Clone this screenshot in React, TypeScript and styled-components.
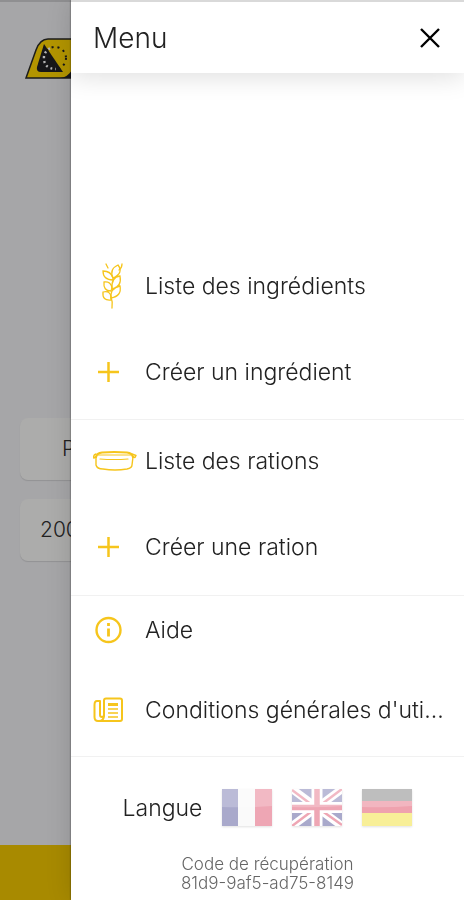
import React, { useState } from "react";
import styled, { createGlobalStyle } from "styled-components";

const GlobalStyle = createGlobalStyle`
  *, *::before, *::after { box-sizing: border-box; }
  body {
    margin: 0;
    background: #a6a6a8;
    color: #222;
    font-family: Inter, "Open Sans", sans-serif;
    font-weight: 300;
  }
  button, a { color: inherit; font: inherit; }
`;

const Screen = styled.div`
  display: flex;
  flex-direction: column;
  min-height: 100vh;
  overflow: hidden;
`;

const PageHeader = styled.header`
  padding: 36px 24px 0;
  border-top: 2px solid #8f8f91;
`;

const PageContent = styled.main`
  display: flex;
  flex: 1;
  flex-direction: column;
  justify-content: center;
  gap: 19px;
  padding: 50px 20px 0;
`;

const PageCard = styled.div<{ $indent: number }>`
  height: 62px;
  padding-left: ${({ $indent }) => $indent}px;
  border-radius: 8px;
  background: #acacab;
  box-shadow: 0 1px 1px rgba(0, 0, 0, 0.12);
  font-size: 21px;
  line-height: 62px;
`;

const PageFooter = styled.footer`
  height: 55px;
  background: #a88a00;
`;

const Drawer = styled.aside`
  position: fixed;
  inset: 0 0 0 71px;
  display: flex;
  flex-direction: column;
  overflow-y: auto;
  border-top: 2px solid #d9d9d9;
  background: #fff;
  box-shadow: 0 0 2px rgba(0, 0, 0, 0.55), 0 0 24px rgba(0, 0, 0, 0.14);
`;

const DrawerHeader = styled.header`
  display: flex;
  flex: none;
  align-items: center;
  justify-content: space-between;
  height: 71px;
  padding: 0 22px;
  box-shadow: 0 4px 26px rgba(0, 0, 0, 0.13);
`;

const Title = styled.h1`
  margin: 0;
  font-size: 28px;
  font-weight: 300;
  line-height: 32px;
`;

const CloseButton = styled.button`
  display: grid;
  padding: 0;
  border: 0;
  background: none;
  color: #000;
  cursor: pointer;
`;

const Nav = styled.nav`
  padding-top: 179px;
`;

const Group = styled.div<{ $gap: number; $top: number; $bottom: number }>`
  display: flex;
  flex-direction: column;
  gap: ${({ $gap }) => $gap}px;
  padding: ${({ $top, $bottom }) => `${$top}px 12px ${$bottom}px 22px`};
  border-bottom: 1px solid #f1f1f1;
`;

const MenuLink = styled.a`
  display: flex;
  align-items: center;
  height: 68px;
  font-size: 23px;
  line-height: 28px;
  text-decoration: none;
`;

const IconSlot = styled.span`
  display: grid;
  flex: none;
  width: 52px;
  color: #f6c51c;
`;

const Label = styled.span`
  overflow: hidden;
  text-overflow: ellipsis;
  white-space: nowrap;
`;

const Languages = styled.section`
  display: flex;
  align-items: center;
  justify-content: center;
  gap: 20px;
  margin-top: 32px;
  font-size: 23px;
  line-height: 30px;
`;

const FlagButton = styled.button`
  display: grid;
  padding: 0;
  border: 0;
  background: none;
  filter: drop-shadow(0 1px 1px rgba(0, 0, 0, 0.3));
  opacity: 0.4;
  cursor: pointer;
`;

const Recovery = styled.p`
  margin: 29px 0 0;
  color: #666;
  font-size: 17px;
  line-height: 19px;
  text-align: center;
`;

const Logo = () => (
  <svg width="96" height="42" viewBox="0 0 96 42" role="img" aria-label="Logo">
    <path d="M2 40 12 12Q16 1 24 1H94L80 40Z" fill="#b39500" stroke="#1d1d1b" strokeWidth="1.5" />
    <path d="M20 6 39 34H17Q12 34 13 29Z" fill="#171719" />
    <path d="M36 40Q44 39 48 32V40Z" fill="#171719" />
    <circle cx="31" cy="20" r="11" fill="none" stroke="#171719" strokeWidth="2" strokeDasharray="2 4" />
    <path d="M26 10.3A11 11 0 0 0 20 18Q19 31 32 31" fill="none" stroke="#b5b5b5" strokeWidth="2.4" strokeDasharray="2 3" />
  </svg>
);

const CloseIcon = () => (
  <svg width="24" height="24" viewBox="0 0 24 24" fill="none" stroke="currentColor" strokeWidth="2.4">
    <path d="m3 3 18 18M21 3 3 21" />
  </svg>
);

const WheatIcon = () => (
  <svg width="40" height="46" viewBox="0 0 40 46" fill="none" stroke="currentColor" strokeWidth="1.3" strokeLinecap="round">
    <path d="M19 45Q20 39 18 34M13 1Q14 3 15 5M29 1Q29 5 26 7" />
    <path d="M18 37Q9 38 10 29Q17 27 18 34ZM18 28Q10 28 11 19Q18 18 19 25ZM20 17Q10 17 10 8Q18 8 20 15Z" />
    <path d="M18 35Q17 25 27 23Q29 33 18 35ZM19 26Q18 14 27 13Q29 24 19 26ZM20 15Q16 6 25 2Q31 10 20 15Z" />
  </svg>
);

const PlusIcon = () => (
  <svg width="32" height="24" viewBox="0 0 32 24" fill="none" stroke="currentColor" strokeWidth="2.5">
    <path d="M5 12h21M15.5 2v20" />
  </svg>
);

const TroughIcon = () => (
  <svg width="44" height="22" viewBox="0 0 44 22" fill="none" stroke="currentColor" strokeWidth="1.4" strokeLinecap="round" strokeLinejoin="round">
    <path d="M3 7Q4 3 9 2.500Q21 1.500 34 2.500Q39 3 40 7" strokeWidth="2.2" />
    <path d="M3 4Q0 5 0.8 8L3 7M39 4 43 5.500 42 7.500 40 7" />
    <path d="M3 7V15Q4 19 10 19Q22 21 34 19Q39 18 39 15L40 7" />
    <path d="M5 5H38" strokeWidth="1" />
    <path d="M7 9Q21 10 35 9" strokeWidth="1.2" />
  </svg>
);

const InfoIcon = () => (
  <svg width="32" height="28" viewBox="0 0 32 28" fill="none" stroke="currentColor" strokeWidth="2.4">
    <circle cx="15.5" cy="14" r="12" />
    <path d="M15.5 12.5v8M15.5 7v3" strokeWidth="2.8" />
  </svg>
);

const NewsIcon = () => (
  <svg width="32" height="26" viewBox="0 0 32 26" fill="none" stroke="currentColor" strokeWidth="2" strokeLinejoin="round">
    <path d="M11 3.5Q11 1.5 13 1.5H27Q29 1.5 29 3.5V22Q29 24 27 24H5Q1.5 24 1.5 20V8Q1.5 4 4 4H7V18Q7 20 9 20Q11 20 11 18Z" />
    <path d="M11 18Q11 24 6 24" />
    <path d="M15 7.5H25" strokeWidth="3" />
    <path d="M15 12H25M15 16H25M15 20H25" strokeWidth="1.5" />
  </svg>
);

const Gloss = () => <path d="M0 0H50V17Q25 19 0 18Z" fill="#fff" fillOpacity="0.22" />;

const FrenchFlag = () => (
  <svg width="50" height="37" viewBox="0 0 50 37">
    <path fill="#f4f4f4" d="M0 0H50V37H0Z" />
    <path fill="#2a2a80" d="M0 0H16V37H0Z" />
    <path fill="#d72345" d="M33 0H50V37H33Z" />
    <Gloss />
  </svg>
);

const BritishFlag = () => (
  <svg width="50" height="37" viewBox="0 0 50 37">
    <path fill="#2a2a80" d="M0 0H50V37H0Z" />
    <path stroke="#fff" strokeWidth="8" d="m0 0 50 37M50 0 0 37" />
    <path stroke="#d72345" strokeWidth="2.5" d="m0 1 24 18M50 0 26 18M0 37 24 19M26 19 50 36" />
    <path stroke="#fff" strokeWidth="11" d="M25 0V37M0 18.5H50" />
    <path stroke="#d72345" strokeWidth="5.5" d="M25 0V37M0 18.5H50" />
    <Gloss />
  </svg>
);

const GermanFlag = () => (
  <svg width="50" height="37" viewBox="0 0 50 37">
    <path fill="#333" d="M0 0H50V12H0Z" />
    <path fill="#d81838" d="M0 12H50V24H0Z" />
    <path fill="#f0d800" d="M0 24H50V37H0Z" />
    <Gloss />
  </svg>
);

const groups = [
  {
    gap: 18, top: 0, bottom: 13,
    items: [
      { label: "Liste des ingrédients", Icon: WheatIcon },
      { label: "Créer un ingrédient", Icon: PlusIcon },
    ],
  },
  {
    gap: 18, top: 7, bottom: 14,
    items: [
      { label: "Liste des rations", Icon: TroughIcon },
      { label: "Créer une ration", Icon: PlusIcon },
    ],
  },
  {
    gap: 12, top: 0, bottom: 12,
    items: [
      { label: "Aide", Icon: InfoIcon },
      { label: "Conditions générales d'uti...", Icon: NewsIcon },
    ],
  },
];

const languages = [
  { name: "Français", Flag: FrenchFlag },
  { name: "English", Flag: BritishFlag },
  { name: "Deutsch", Flag: GermanFlag },
];

export default function App() {
  const [open, setOpen] = useState(true);
  const [language, setLanguage] = useState("Français");

  return (
    <>
      <GlobalStyle />
      <Screen>
        <PageHeader><Logo /></PageHeader>
        <PageContent>
          <PageCard $indent={42}>P</PageCard>
          <PageCard $indent={20}>200</PageCard>
        </PageContent>
        <PageFooter />
      </Screen>
      {open && (
        <Drawer aria-label="Menu">
          <DrawerHeader>
            <Title>Menu</Title>
            <CloseButton type="button" aria-label="Fermer" onClick={() => setOpen(false)}>
              <CloseIcon />
            </CloseButton>
          </DrawerHeader>
          <Nav>
            {groups.map(({ gap, top, bottom, items }) => (
              <Group key={items[0].label} $gap={gap} $top={top} $bottom={bottom}>
                {items.map(({ label, Icon }) => (
                  <MenuLink href="#" key={label}>
                    <IconSlot aria-hidden="true"><Icon /></IconSlot>
                    <Label>{label}</Label>
                  </MenuLink>
                ))}
              </Group>
            ))}
          </Nav>
          <Languages aria-label="Langue">
            <span>Langue</span>
            {languages.map(({ name, Flag }) => (
              <FlagButton type="button" key={name} aria-label={name} aria-pressed={language === name} onClick={() => setLanguage(name)}>
                <Flag />
              </FlagButton>
            ))}
          </Languages>
          <Recovery>Code de récupération<br />81d9-9af5-ad75-8149</Recovery>
        </Drawer>
      )}
    </>
  );
}
